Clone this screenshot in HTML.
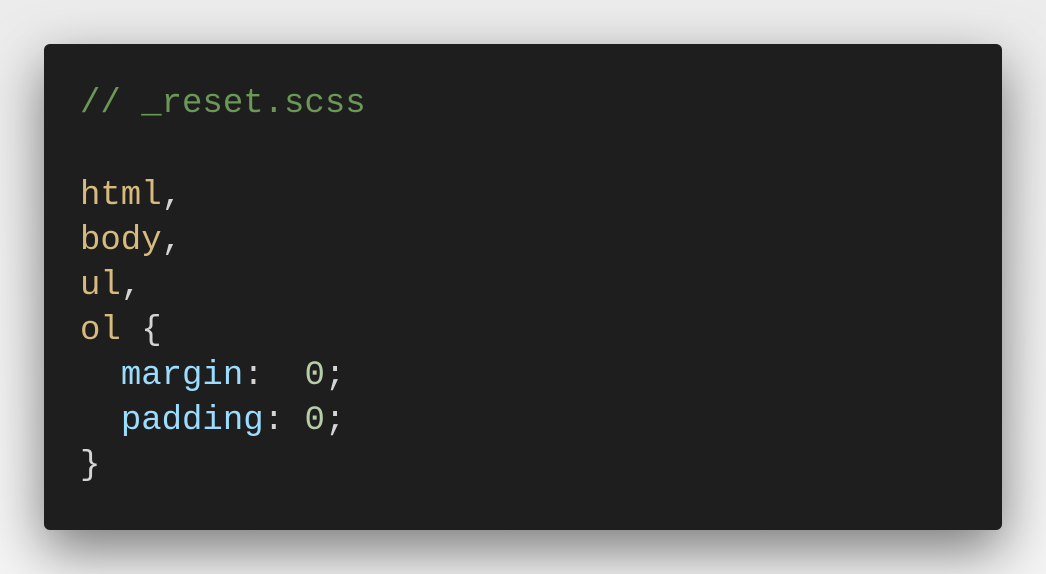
<!DOCTYPE html>
<html><head><style>
html,body{margin:0;padding:0;}
body{width:1046px;height:574px;background:linear-gradient(#ececec,#f4f4f4);position:relative;overflow:hidden;}
.card{position:absolute;left:44px;top:44px;width:958px;height:486px;background:#1e1e1e;border-radius:6px;box-shadow:0 20px 55px rgba(0,0,0,0.5);}
pre{margin:0;position:absolute;left:36px;top:38px;font-family:"Liberation Mono",monospace;font-size:34px;line-height:45px;color:#d4d4d4;}
.c{color:#6a9955}.t{color:#d7ba7d}.p{color:#9cdcfe}.n{color:#b5cea8}
.b{display:block;height:47px}
</style></head><body>
<div class="card"><pre><span class="c">// _reset.scss</span>
<span class="b"></span><span class="t">html</span>,
<span class="t">body</span>,
<span class="t">ul</span>,
<span class="t">ol</span> {
  <span class="p">margin</span>:  <span class="n">0</span>;
  <span class="p">padding</span>: <span class="n">0</span>;
}</pre></div>
</body></html>
